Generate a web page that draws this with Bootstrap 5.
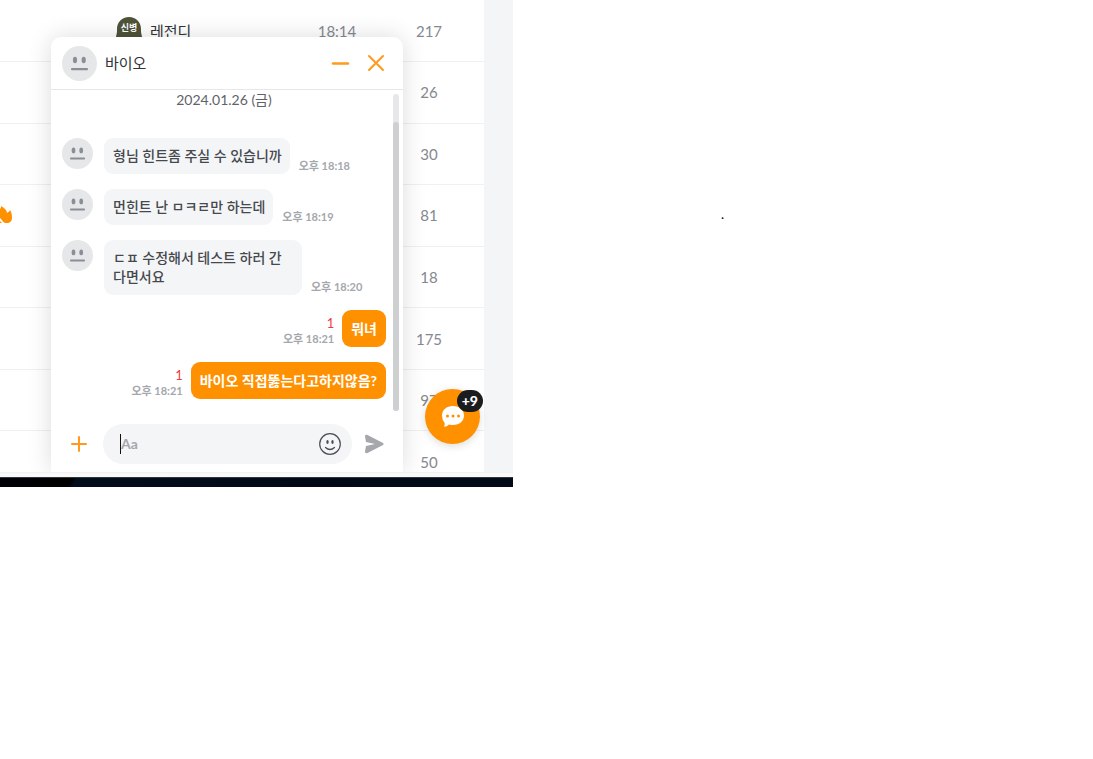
<!DOCTYPE html>
<html lang="ko">
<head>
<meta charset="utf-8">
<meta name="viewport" content="width=device-width, initial-scale=1">
<title>채팅</title>
<link href="https://cdn.jsdelivr.net/npm/bootstrap@5.3.0/dist/css/bootstrap.min.css" rel="stylesheet">
<style>
body{font-family:Lato,"Noto Sans CJK KR",sans-serif;background:#fff;color:#000}
.stage{width:46%;min-width:513px}
.viewport{height:472px;background:#f4f5f7}
.board{height:493px;margin-right:29px;background:#fff}
.board table{height:493px;table-layout:fixed;font-size:15px;line-height:24px;color:#84888f}
.board td{height:61px;padding:0;border-bottom:1px solid #eff0f2;vertical-align:middle}
.c-flag{width:116px}.c-time{width:74px}.c-view{width:110px}
.writer{color:#303338;font-size:15px}
.chat{left:51px;right:110px;top:37px;bottom:0;border-radius:10px 10px 0 0;box-shadow:0 0 24px rgba(0,0,0,.14)}
.chat-head{height:53px;border-bottom:1px solid #e6e7e9;padding:0 17px 0 11px}
.who{font-size:15px;line-height:24px;color:#303338}
.plain{border:0;background:none;padding:0;display:flex}
.chat-log{height:321px;padding:0 17px 0 11px}
.day{font-size:14px;line-height:20px;color:#5f6269;margin-bottom:28px}
.msgs{gap:15px}
.bub{background:#f4f5f7;color:#45484d;border-radius:9px;padding:8px 8px 9px 9px;font-size:14px;line-height:19px;font-weight:500;max-width:198px;word-break:break-all}
.bub.got{margin:0 9px 0 11px}
.bub.me{background:#ff9100;color:#fff;font-weight:700;max-width:220px;padding:9px}
.stamp{font-size:11px;line-height:16px;color:#a5a7ac;font-weight:700}
.unread{font-size:13px;color:#f2383c;font-weight:400}
.track{top:57px;right:4px;width:6px;height:317px;border-radius:3px;background:#e6e7e9}
.thumb{height:289px;border-radius:3px;background:#cdcfd1;margin-top:28px}
.composer{padding:13px 17px 8px 20px}
.entry{height:40px;border-radius:20px;background:#f4f5f7;padding:0 11px 0 17px}
.entry input{border:0;background:none;outline:0;padding:0;font-size:14px;line-height:20px;color:#303338;min-width:0}
.entry input::placeholder{color:#a5a7ac;opacity:1;font-weight:700}
.caret{width:1px;height:20px;background:#111}
.fab{right:33px;bottom:28px;width:55px;height:55px;border:0;border-radius:50%;background:#ff9100;box-shadow:0 2px 8px rgba(0,0,0,.14)}
.count{right:-3px;top:1px;height:22px;padding:0 5px;border-radius:11px;background:#1b1c1e;color:#fff;font-size:14px;line-height:22px;font-weight:900}
.edge{height:5px;background:linear-gradient(#f0f0f0,#fafafa 2px)}
.desk{height:10px;background:linear-gradient(120deg,#000008 0,#000 14%,#020d1c 15%,#020916 60%,#020a18);border-top:1px solid #30363b}
.note{padding:205px 0 0 208px;font-size:13px;line-height:18px}
</style>
</head>
<body>
<svg width="0" height="0" class="position-absolute" aria-hidden="true"><symbol id="face" viewBox="0 0 35 35"><circle cx="17.500" cy="17.500" r="17.500" fill="#e6e7e9"/><ellipse cx="13" cy="14" rx="2.100" ry="3.300" fill="#8b8e97"/><ellipse cx="21.700" cy="14" rx="2.100" ry="3.300" fill="#8b8e97"/><rect x="9" y="22" width="17" height="2.200" rx="1" fill="#8b8e97"/></symbol></svg>
<div class="d-flex align-items-start">
<main class="stage flex-shrink-0">
 <div class="viewport position-relative overflow-hidden">
  <div class="board">
   <table class="w-100 text-center">
    <colgroup><col class="c-flag"><col><col class="c-time"><col class="c-view"></colgroup>
    <tbody>
    <tr><td></td><td class="text-start"><div class="d-flex align-items-center">
      <svg width="26" height="28" viewBox="0 0 26 28" class="me-2 flex-shrink-0" role="img" aria-label="신병"><path d="M1 15V12C1 5 6 0 13 0S25 5 25 12v3l1 5-3 3H3l-3-3z" fill="#4e5339"/><text x="13" y="14" text-anchor="middle" font-size="9" font-weight="700" fill="#fff">신병</text></svg><span class="writer">레전디</span></div></td><td>18:14</td><td>217</td></tr>
    <tr><td></td><td></td><td></td><td>26</td></tr>
    <tr><td></td><td></td><td></td><td>30</td></tr>
    <tr><td class="text-start"><svg class="d-block" width="13" height="18" viewBox="0 0 13 18" aria-hidden="true"><path d="M1 0C5 2 7 5 7 7c1-1 2-1 3-3 2 3 2 6 2 8 0 3-2 5-5 5-4 0-4-2-7-5V3c1-1 1-2 1-3zM0 15l2 2H0z" fill="#ff9100"/></svg></td><td></td><td></td><td>81</td></tr>
    <tr><td></td><td></td><td></td><td>18</td></tr>
    <tr><td></td><td></td><td></td><td>175</td></tr>
    <tr><td></td><td></td><td></td><td>97</td></tr>
    <tr><td></td><td></td><td></td><td>50</td></tr>
    </tbody>
   </table>
  </div>

  <section class="chat position-absolute bg-white" aria-label="바이오">
   <header class="chat-head d-flex align-items-center">
    <svg width="35" height="35" aria-hidden="true"><use href="#face"/></svg>
    <span class="who ms-2 me-auto">바이오</span>
    <button class="plain me-3" aria-label="최소화"><svg width="20" height="20" stroke="#ff9a1f" stroke-width="2.400" stroke-linecap="round"><path d="M3 10.500h15"/></svg></button>
    <button class="plain" aria-label="닫기"><svg width="20" height="20" stroke="#ff9a1f" stroke-width="2" stroke-linecap="round"><path d="M3 3l14 14M17 3L3 17"/></svg></button>
   </header>
   <div class="chat-log">
    <div class="day text-center">2024.01.26 (금)</div>
    <div class="msgs d-flex flex-column">
     <div class="d-flex"><svg class="flex-shrink-0" width="31" height="31" aria-hidden="true"><use href="#face"/></svg><div class="bub got">형님 힌트좀 주실 수 있습니까</div><span class="stamp align-self-end">오후 18:18</span></div>
     <div class="d-flex"><svg class="flex-shrink-0" width="31" height="31" aria-hidden="true"><use href="#face"/></svg><div class="bub got">먼힌트 난 ㅁㅋㄹ만 하는데</div><span class="stamp align-self-end">오후 18:19</span></div>
     <div class="d-flex"><svg class="flex-shrink-0" width="31" height="31" aria-hidden="true"><use href="#face"/></svg><div class="bub got">ㄷㅍ 수정해서 테스트 하러 간다면서요</div><span class="stamp align-self-end">오후 18:20</span></div>
     <div class="d-flex justify-content-end"><div class="stamp text-end me-2 align-self-end"><div class="unread">1</div>오후 18:21</div><div class="bub me">뭐녀</div></div>
     <div class="d-flex justify-content-end"><div class="stamp text-end me-2 align-self-end"><div class="unread">1</div>오후 18:21</div><div class="bub me">바이오 직접뚫는다고하지않음?</div></div>
    </div>
   </div>
   <div class="track position-absolute"><div class="thumb"></div></div>
   <form class="composer d-flex align-items-center">
    <button type="button" class="plain" aria-label="추가"><svg width="16" height="16" stroke="#ff9a1f" stroke-width="2" stroke-linecap="round"><path d="M8 1v14M1 8h14"/></svg></button>
    <div class="entry d-flex align-items-center flex-fill ms-3 me-2">
     <span class="caret"></span><input class="flex-fill" type="text" placeholder="Aa" aria-label="메시지">
     <button type="button" class="plain" aria-label="이모티콘"><svg width="22" height="22" fill="none" stroke="#4b4e54" stroke-width="1.200" stroke-linecap="round"><circle cx="11" cy="11" r="10.300"/><path d="M6.500 14.500q4.500 4 9 0"/><g fill="#4b4e54" stroke="none"><ellipse cx="8.500" cy="9" rx="1.200" ry="1.900"/><ellipse cx="13.500" cy="9" rx="1.200" ry="1.900"/></g></svg></button>
    </div>
    <button class="plain ms-1" aria-label="보내기"><svg width="22" height="20" viewBox="0 0 22 20"><path d="M1 2.500C1 1 2 .5 3.500 1L19 9q1.500 1 0 2L3.500 19C2 19.500 1 19 1 17.500L2 12l9-2L2 8z" fill="#a5a7ac"/></svg></button>
   </form>
  </section>

  <button class="fab position-absolute d-flex align-items-center justify-content-center p-0" aria-label="채팅 목록">
   <svg width="24" height="22" viewBox="0 0 24 22"><path d="M12 0c6.500 0 11 4 11 9.500S18.500 19 12 19q-2 0-4-.6Q6 20.500 3 20.800q1-2 .6-4Q1 14 1 9.500C1 4 5.500 0 12 0z" fill="#fff"/><g fill="#ff9100"><circle cx="6.500" cy="10" r="1.500"/><circle cx="12" cy="10" r="1.500"/><circle cx="17.500" cy="10" r="1.500"/></g></svg>
   <span class="count position-absolute">+9</span>
  </button>
 </div>
 <div class="edge"></div>
 <div class="desk"></div>
</main>
<p class="note mb-0">.</p>
</div>
<script src="https://cdn.jsdelivr.net/npm/bootstrap@5.3.0/dist/js/bootstrap.bundle.min.js"></script>
</body>
</html>
